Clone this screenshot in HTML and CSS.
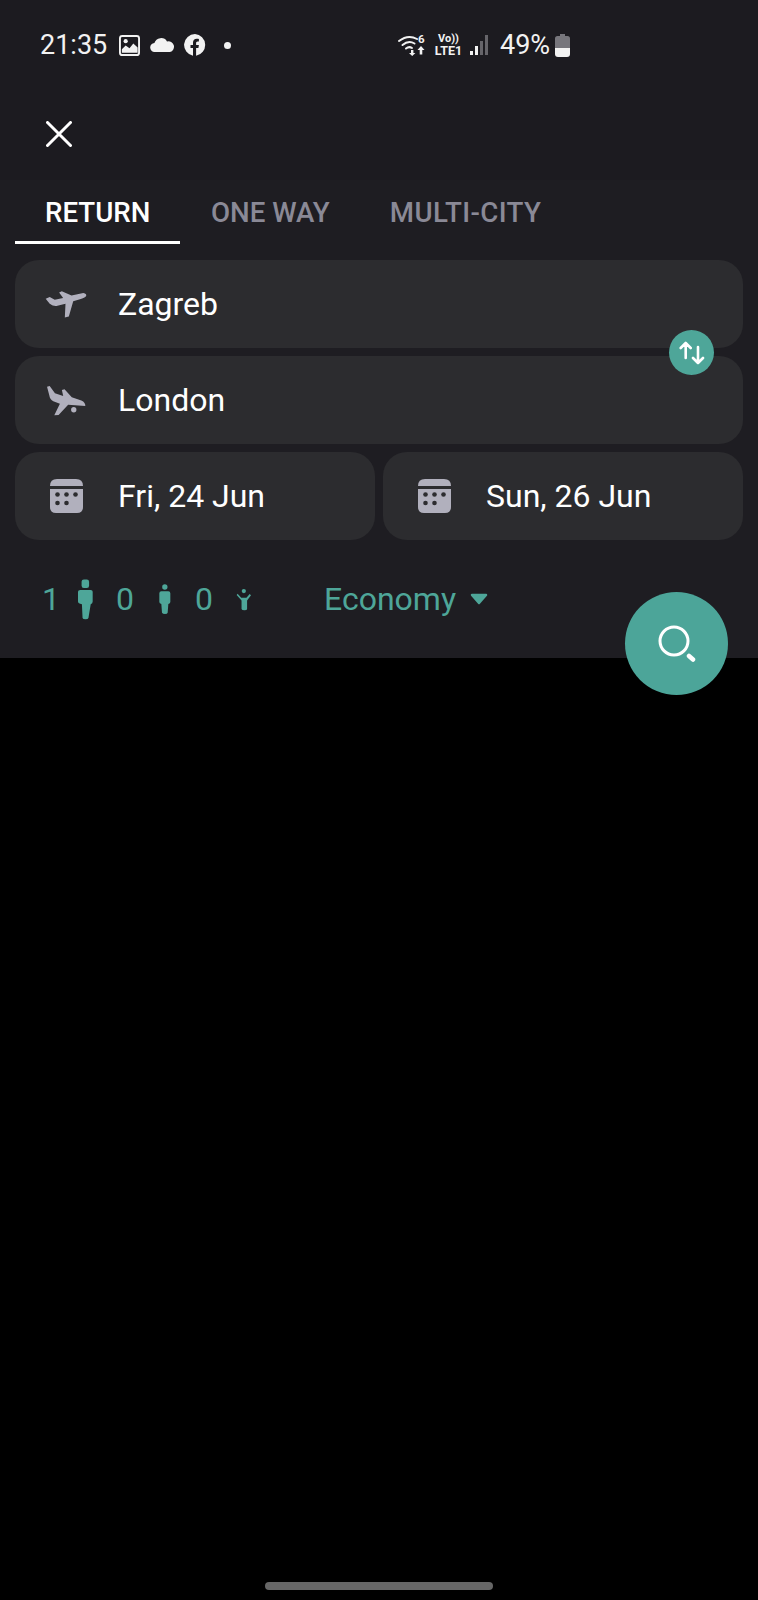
FILE: index.html
```html
<!DOCTYPE html>
<html lang="en">

<head>
    <meta charset="UTF-8">
    <meta name="viewport" content="width=device-width, initial-scale=1.0">
    <title>Flight search</title>
    <link rel="stylesheet" href="styles.css">
</head>

<body>
    <div class="screen">
        <div class="panel">
            <div class="head">
                <!-- Status bar -->
                <div class="status">
                    <div class="status-left">
                        <span class="time">21:35</span>
                        <svg class="st-image" viewBox="0 0 22 22">
                            <rect x="1" y="1" width="20" height="20" rx="2.5" fill="none" stroke="#f2f2f2" stroke-width="2" />
                            <path fill="#f2f2f2" d="M3 18.500v-3.500l4-4 4 3 4-5 4.500 4v5.500z" />
                            <circle cx="7" cy="6.500" r="2.200" fill="#f2f2f2" />
                        </svg>
                        <svg class="st-cloud" viewBox="0 0 25 14">
                            <path fill="#f2f2f2" d="M5 14a4.5 4.5 0 0 1-.6-9A7 7 0 0 1 17 3.4a5.400 5.400 0 0 1 3 10.600z" />
                        </svg>
                        <svg class="st-fb" viewBox="0 0 22 22">
                            <path fill="#f2f2f2" d="M11 0a11 11 0 0 0-2 21.800v-7.700H6.500V11H9V8.700c0-2.500 1.500-3.900 3.700-3.900 1.100 0 2.200.2 2.200.2v2.500h-1.200c-1.200 0-1.600.8-1.600 1.500V11h2.800l-.5 3.100h-2.300v7.700A11 11 0 0 0 11 0z" />
                        </svg>
                        <span class="st-dot"></span>
                    </div>
                    <div class="status-right">
                        <svg class="st-wifi" viewBox="0 -3 29 28">
                            <g fill="none" stroke="#f2f2f2" stroke-width="2" stroke-linecap="round">
                                <path d="M1 7q9-7 18-2" />
                                <path d="M4.500 11q6-5 12-1.500" />
                                <path d="M8 14.500q3-2.500 6-.5" />
                            </g>
                            <text class="st-six" x="20" y="9">6</text>
                            <path fill="#f2f2f2" d="M13 16h2.400v3h2l-3.200 3-3.200-3h2zM23 12l3.500 4h-2.200v4.500h-2.600V16h-2.200z" />
                        </svg>
                        <div class="st-volte">
                            <span class="st-vo">Vo))</span>
                            <span>LTE1</span>
                        </div>
                        <div class="st-signal">
                            <i class="bar-1"></i>
                            <i class="bar-2"></i>
                            <i class="bar-3"></i>
                            <i class="bar-4"></i>
                        </div>
                        <span class="battery-text">49%</span>
                        <svg class="st-battery" viewBox="0 0 15 23">
                            <path fill="#77767c" d="M5 0h5v2h2.500Q15 2 15 4.500V14H0V4.500Q0 2 2.500 2H5z" />
                            <path fill="#f2f2f2" d="M0 14h15v6q0 3-3 3H3q-3 0-3-3z" />
                        </svg>
                    </div>
                </div>

                <div class="close-row">
                    <svg class="close" viewBox="0 0 26 26">
                        <path d="M1.500 1.500l23 23M24.500 1.500l-23 23" fill="none" stroke="#fff" stroke-width="3" stroke-linecap="round" />
                    </svg>
                </div>
            </div>

            <!-- Tabs -->
            <nav class="tabs">
                <a class="tab tab-return active">RETURN</a>
                <a class="tab">ONE WAY</a>
                <a class="tab tab-multi">MULTI-CITY</a>
            </nav>

            <!-- Search form -->
            <div class="form">
                <div class="field">
                    <svg class="icon-plane" viewBox="130 115 140 95">
                        <path fill="#b1b0bd" d="M138 145L150 140L165 148L190 143L178 127L186 123L215 136L250 128Q262 130 258 138Q255 143 240 147L220 153L207 198L195 201L197 160L170 167Q160 168 150 160Z" />
                    </svg>
                    <span>Zagreb</span>
                </div>
                <div class="field">
                    <svg class="icon-plane" viewBox="130 400 140 100">
                        <path fill="#b1b0bd" d="M141 408L149 406L165 428L190 436L186 418L194 416L216 440L245 450Q258 456 257 467L205 463L176 494L163 495L180 460L160 452Q150 448 148 435Z" />
                        <circle cx="222" cy="478" r="8" fill="#b1b0bd" />
                    </svg>
                    <span>London</span>
                </div>
                <div class="dates">
                    <div class="field date-field">
                        <svg class="icon-cal" viewBox="0 0 33 34">
                            <path fill="#b1b0bd" d="M0 7q0-7 7-7h19q7 0 7 7H0zM0 10h33v18q0 6-6 6H6q-6 0-6-6z" />
                            <g fill="#2c2c2f">
                                <circle cx="7.500" cy="15.500" r="2.300" />
                                <circle cx="16.500" cy="15.500" r="2.300" />
                                <circle cx="25.500" cy="15.500" r="2.300" />
                                <circle cx="7.500" cy="24" r="2.300" />
                                <circle cx="16.500" cy="24" r="2.300" />
                            </g>
                        </svg>
                        <span>Fri, 24 Jun</span>
                    </div>
                    <div class="field date-field">
                        <svg class="icon-cal" viewBox="0 0 33 34">
                            <path fill="#b1b0bd" d="M0 7q0-7 7-7h19q7 0 7 7H0zM0 10h33v18q0 6-6 6H6q-6 0-6-6z" />
                            <g fill="#2c2c2f">
                                <circle cx="7.500" cy="15.500" r="2.300" />
                                <circle cx="16.500" cy="15.500" r="2.300" />
                                <circle cx="25.500" cy="15.500" r="2.300" />
                                <circle cx="7.500" cy="24" r="2.300" />
                                <circle cx="16.500" cy="24" r="2.300" />
                            </g>
                        </svg>
                        <span>Sun, 26 Jun</span>
                    </div>
                </div>
                <button class="swap" aria-label="Swap">
                    <svg viewBox="0 0 26 24">
                        <path d="M6.700 17V2M1.700 7l5-5 5 5M19 6v16M14 17l5 5 5-5" fill="none" stroke="#fff" stroke-width="2.600" stroke-linecap="round" stroke-linejoin="round" />
                    </svg>
                </button>
            </div>

            <!-- Passengers and class -->
            <div class="options">
                <span class="count">1</span>
                <svg class="adult" viewBox="233 88 46 123">
                    <rect x="244" y="88" width="23" height="26" rx="7" fill="#4ea699" />
                    <path fill="#4ea699" d="M240 120h32q6 0 6 6v30q0 6-6 8l-7 42q-1 4-9 4t-9-4l-2-42q-12-2-12-8v-30q0-6 7-6z" />
                </svg>
                <span class="count">0</span>
                <svg class="teen" viewBox="477 104 34 90">
                    <circle cx="493.500" cy="113" r="8" fill="#4ea699" />
                    <path fill="#4ea699" d="M483 126h21q6 0 6 6v26q0 4-6 6l-2 26q-1 4-8 4t-9-4l-2-26q-6-2-6-6v-26q0-6 6-6z" />
                </svg>
                <span class="count">0</span>
                <svg class="child" viewBox="708 115 46 68">
                    <circle cx="732" cy="123" r="6.500" fill="#4ea699" />
                    <path fill="#4ea699" d="M713 131l11 13h16l10-12 4 4-12 16v26q0 4-8 4t-9-4v-26l-15-17z" />
                </svg>
                <div class="cabin">
                    <span>Economy</span>
                    <svg class="caret" viewBox="0 0 18 12">
                        <path fill="#4ea699" stroke="#4ea699" stroke-width="2.500" stroke-linejoin="round" d="M2 2h14l-7 8z" />
                    </svg>
                </div>
            </div>

            <button class="fab" aria-label="Search">
                <svg viewBox="0 0 38 38">
                    <circle cx="16" cy="16" r="14" fill="none" stroke="#fff" stroke-width="3" />
                    <path d="M31 31l4 3.500" fill="none" stroke="#fff" stroke-width="4.500" stroke-linecap="round" />
                </svg>
            </button>
        </div>

        <div class="home-bar"></div>
    </div>
</body>

</html>
```

FILE: styles.css
```css
* {
    box-sizing: border-box;
}

body {
    margin: 0;
    background-color: #000;
    font-family: Roboto, "Liberation Sans", sans-serif;
    color: #fff;
}

svg {
    display: block;
    flex: none;
}

.screen {
    display: flex;
    flex-direction: column;
    justify-content: space-between;
    height: 1600px;
    padding-bottom: 10px;
}

.panel {
    position: relative;
    height: 658px;
    background-color: #1e1d22;
}

.head {
    height: 180px;
    padding-top: 33px;
    background-color: #1c1b20;
}

/* Status bar */
.status {
    display: flex;
    justify-content: space-between;
    align-items: center;
    height: 24px;
    padding: 0 188px 0 40px;
}

.status-left,
.status-right {
    display: flex;
    align-items: center;
}

.time {
    width: 79px;
    font-size: 27px;
    color: #f2f2f2;
}

.st-image {
    width: 21px;
    height: 21px;
    margin-right: 10px;
}

.st-cloud {
    width: 25px;
    height: 14px;
    margin-right: 9px;
}

.st-fb {
    width: 22px;
    height: 22px;
    margin-right: 18px;
}

.st-dot {
    width: 7px;
    height: 7px;
    border-radius: 50%;
    background-color: #f2f2f2;
}

.st-wifi {
    width: 29px;
    height: 28px;
    margin-right: 8px;
}

.st-six {
    font-size: 11.5px;
    font-weight: 700;
    fill: #f2f2f2;
}

.st-volte {
    display: flex;
    flex-direction: column;
    align-items: center;
    width: 27px;
    margin-right: 8px;
    font-size: 12.5px;
    font-weight: 700;
    line-height: 12px;
    color: #f2f2f2;
}

.st-vo {
    font-size: 11px;
}

.st-signal {
    display: flex;
    align-items: flex-end;
    gap: 2px;
    height: 20px;
    margin-right: 12px;
}

.st-signal i {
    display: block;
    width: 3px;
    background-color: #f2f2f2;
}

.st-signal .bar-1 {
    height: 4px;
}

.st-signal .bar-2 {
    height: 9px;
}

.st-signal .bar-3 {
    height: 14px;
    background-color: #66656a;
}

.st-signal .bar-4 {
    height: 20px;
    background-color: #66656a;
}

.battery-text {
    width: 55px;
    font-size: 27px;
    color: #f2f2f2;
}

.st-battery {
    width: 15px;
    height: 23px;
}

/* Close */
.close-row {
    padding: 64px 0 0 46px;
}

.close {
    width: 26px;
    height: 26px;
}

/* Tabs */
.tabs {
    display: flex;
    height: 64px;
    margin: 0 0 0 15px;
    padding-top: 17px;
}

.tab {
    height: 47px;
    padding: 0 30px;
    font-size: 27.7px;
    font-weight: 500;
    line-height: 32px;
    color: #8a8996;
}

.tab-return {
    width: 165px;
    margin-right: 1px;
}

.tab-multi {
    letter-spacing: 0.4px;
}

.tab.active {
    color: #fff;
    border-bottom: 3px solid #fff;
}

/* Form */
.form {
    position: relative;
    display: flex;
    flex-direction: column;
    gap: 8px;
    margin: 16px 15px 0;
}

.field {
    display: flex;
    align-items: center;
    height: 88px;
    padding-left: 28px;
    border-radius: 24px;
    background-color: #2c2c2f;
    font-size: 32px;
}

.field span {
    margin-left: 28px;
}

.icon-plane {
    width: 47px;
    height: 33px;
}

.dates {
    display: flex;
    gap: 8px;
}

.date-field {
    flex: 1;
    padding-left: 35px;
}

.icon-cal {
    width: 33px;
    height: 34px;
}

.date-field span {
    margin-left: 35px;
}

.swap {
    position: absolute;
    top: 70px;
    right: 29px;
    display: flex;
    align-items: center;
    justify-content: center;
    width: 45px;
    height: 45px;
    padding: 0;
    border: none;
    border-radius: 50%;
    background-color: #4ea699;
}

.swap svg {
    width: 26px;
    height: 24px;
}

/* Passengers */
.options {
    display: flex;
    align-items: center;
    height: 80px;
    margin-top: 19px;
    padding-left: 42px;
    font-size: 32px;
    color: #4ea699;
}

.count {
    width: 18px;
    text-align: center;
}

.adult {
    width: 15px;
    height: 41px;
    margin: 0 23px 0 18px;
}

.teen {
    width: 12px;
    height: 30px;
    margin: 0 24px 0 25px;
}

.child {
    width: 15px;
    height: 23px;
    margin: 0 0 0 23px;
}

.cabin {
    display: flex;
    align-items: center;
    margin-left: 73px;
}

.caret {
    width: 18px;
    height: 12px;
    margin-left: 14px;
}

.fab {
    position: absolute;
    top: 592px;
    left: 625px;
    display: flex;
    align-items: center;
    justify-content: center;
    width: 103px;
    height: 103px;
    padding: 0;
    border: none;
    border-radius: 50%;
    background-color: #4ca599;
}

.fab svg {
    width: 38px;
    height: 38px;
}

.home-bar {
    align-self: center;
    width: 228px;
    height: 8px;
    border-radius: 4px;
    background-color: #666;
}
```
